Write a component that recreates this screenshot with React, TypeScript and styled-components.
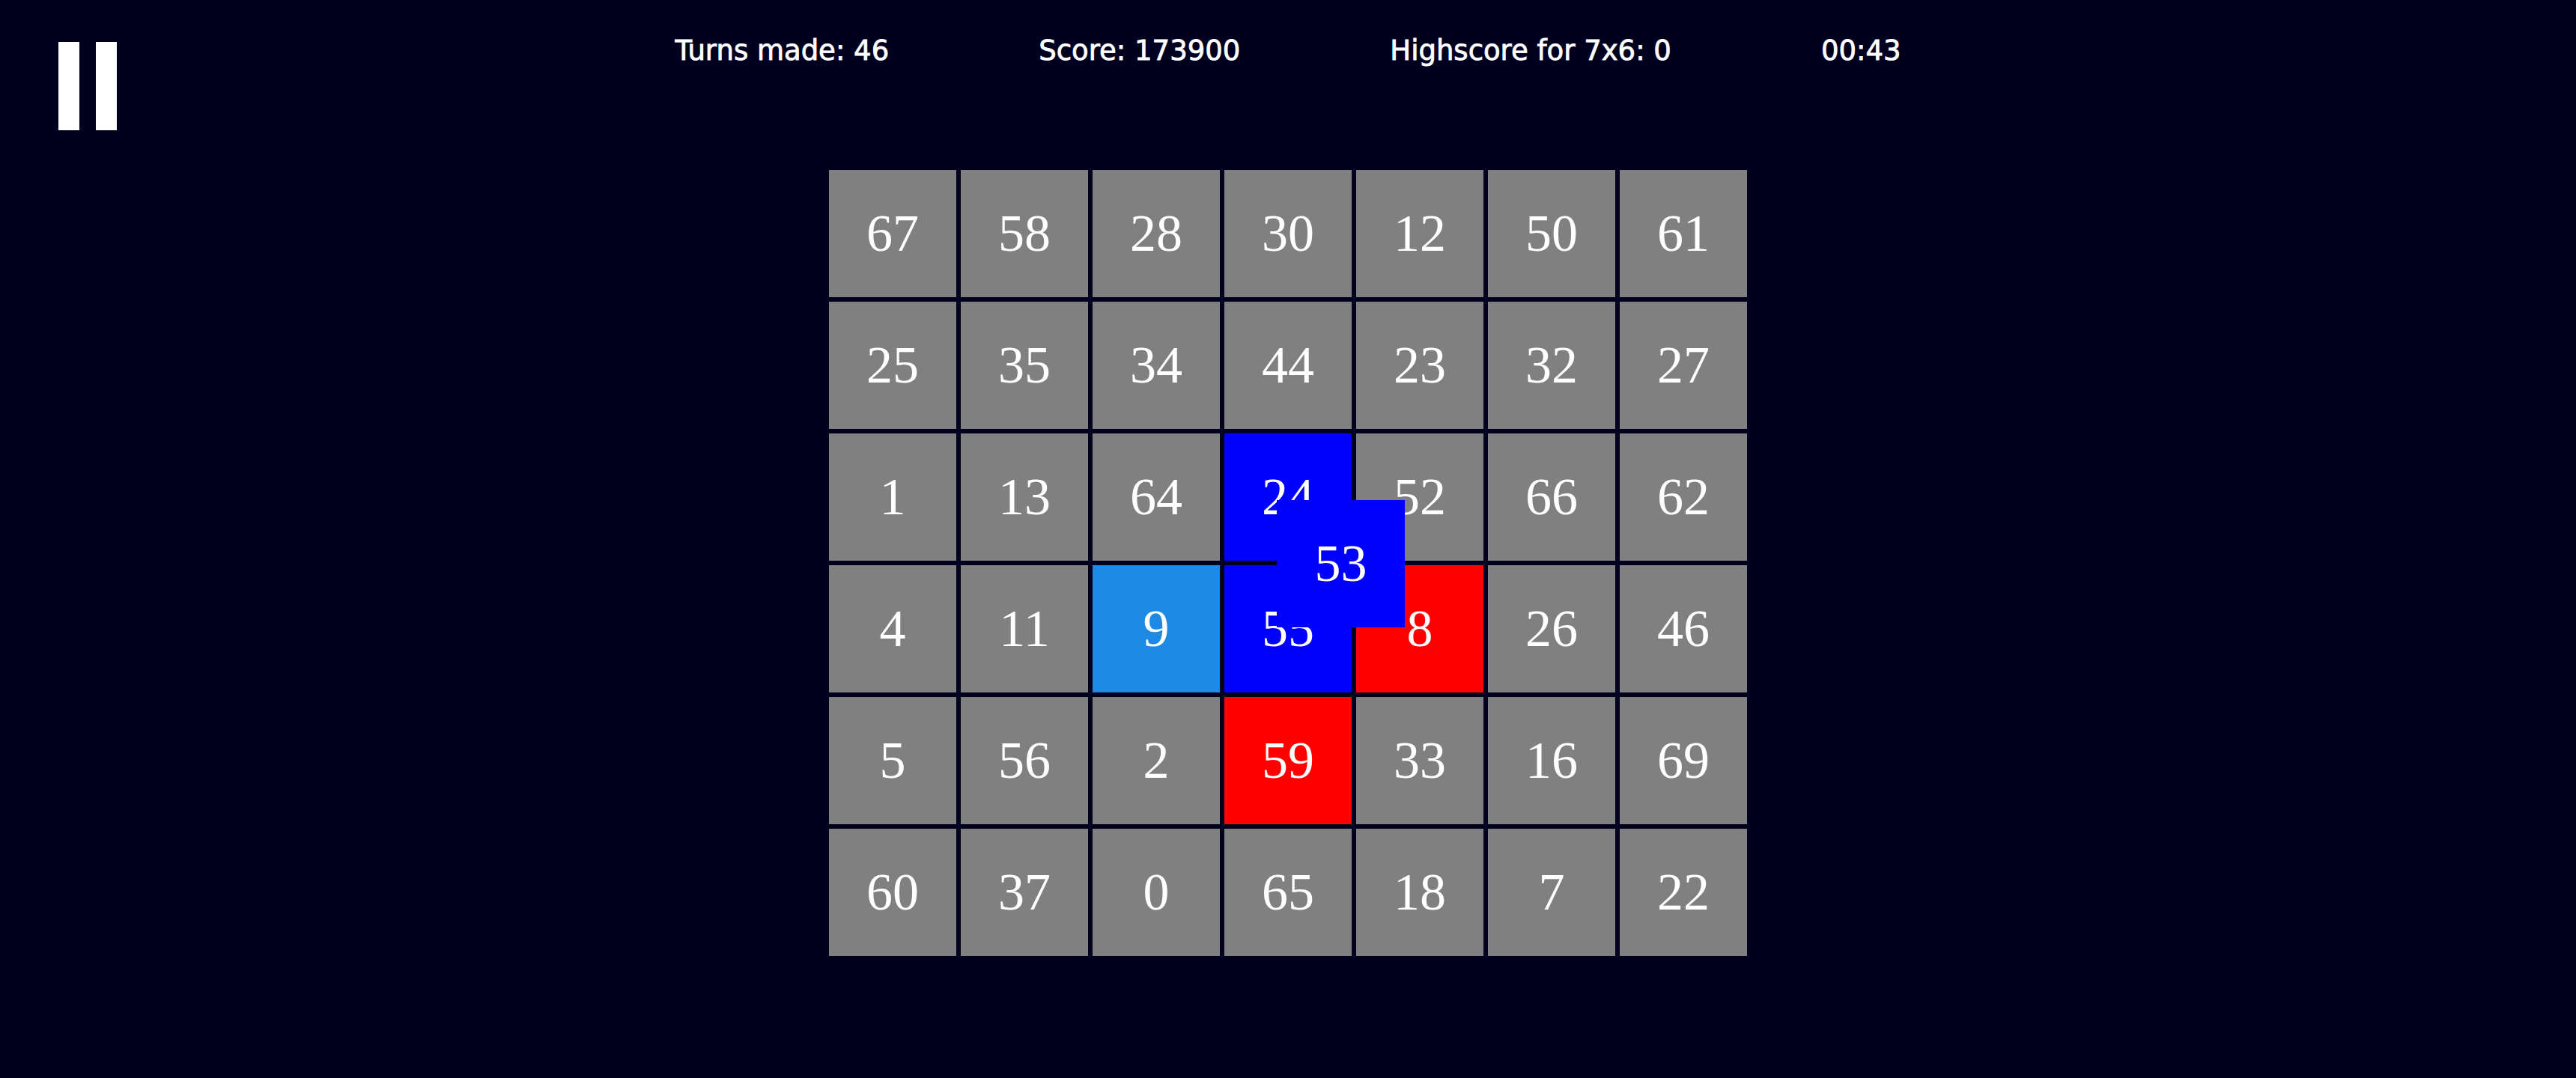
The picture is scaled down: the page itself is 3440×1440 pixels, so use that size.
import React, {FC} from 'react';
import styled, {createGlobalStyle} from "styled-components";

type Tone = 'plain' | 'blue' | 'sky' | 'red'

interface ICell {
    value: number,
    tone: Tone
}

const tones: Record<Tone, string> = {
    plain: '#808080',
    blue: '#0000ff',
    sky: '#1e88e5',
    red: '#ff0000',
}

const values: number[][] = [
    [67, 58, 28, 30, 12, 50, 61],
    [25, 35, 34, 44, 23, 32, 27],
    [1, 13, 64, 24, 52, 66, 62],
    [4, 11, 9, 55, 8, 26, 46],
    [5, 56, 2, 59, 33, 16, 69],
    [60, 37, 0, 65, 18, 7, 22],
]

const coloured: Record<string, Tone> = {
    '2-3': 'blue',
    '3-3': 'blue',
    '3-2': 'sky',
    '3-4': 'red',
    '4-3': 'red',
}

const cells: ICell[] = values.flatMap((row, r) =>
    row.map((value, c) => ({value, tone: coloured[`${r}-${c}`] ?? 'plain'}))
)

const GlobalStyle = createGlobalStyle`
  html, body {
    margin: 0;
    padding: 0;
    background: #00001e;
  }
  #root {
    min-height: 1440px;
  }
`

const Page = styled.div`
  min-height: 1440px;
  background: #00001e;
  color: #fff;
  display: flex;
  flex-direction: column;
`

const TopBar = styled.div`
  display: grid;
  grid-template-columns: 1fr auto 1fr;
  align-items: start;
  padding: 0 78px;
`

const PauseButton = styled.button`
  margin-top: 56px;
  width: 78px;
  height: 118px;
  padding: 0;
  border: none;
  background: transparent;
  display: flex;
  gap: 22px;
  cursor: pointer;
  justify-self: start;
`

const PauseBar = styled.span`
  width: 28px;
  height: 118px;
  background: #fff;
`

const Stats = styled.div`
  display: flex;
  gap: 200px;
  margin-top: 45px;
  font-family: "DejaVu Sans", Lato, sans-serif;
  font-size: 37px;
  line-height: 46px;
  white-space: nowrap;
  -webkit-text-stroke: 0.8px #fff;
`

const BoardArea = styled.div`
  display: flex;
  justify-content: center;
  margin-top: 53px;
`

const Board = styled.div`
  position: relative;
  display: grid;
  grid-template-columns: repeat(7, 170px);
  grid-template-rows: repeat(6, 170px);
  gap: 6px;
`

const Tile = styled.div<{ $tone: Tone }>`
  width: 170px;
  height: 170px;
  background: ${p => tones[p.$tone]};
  display: flex;
  align-items: center;
  justify-content: center;
  font-family: "Liberation Serif", "DejaVu Serif", serif;
  font-size: 70px;
  color: #fff;
`

const MovingTile = styled(Tile)`
  position: absolute;
  left: 598px;
  top: 441px;
  width: 171px;
`

const App: FC = () => {
    return (
        <Page>
            <GlobalStyle/>
            <TopBar>
                <PauseButton aria-label="pause">
                    <PauseBar/>
                    <PauseBar/>
                </PauseButton>
                <Stats>
                    <div>Turns made: 46</div>
                    <div>Score: 173900</div>
                    <div>Highscore for 7x6: 0</div>
                    <div>00:43</div>
                </Stats>
                <div/>
            </TopBar>
            <BoardArea>
                <Board>
                    {cells.map((cell, i) => (
                        <Tile key={i} $tone={cell.tone}>{cell.value}</Tile>
                    ))}
                    <MovingTile $tone="blue">53</MovingTile>
                </Board>
            </BoardArea>
        </Page>
    );
};

export default App;
